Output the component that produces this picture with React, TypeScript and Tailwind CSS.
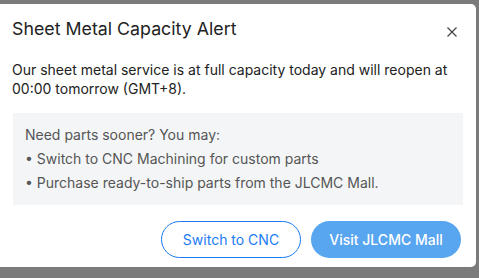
import React from "react";

export default function App() {
  return (
    <div className="w-[479px] h-[278px] bg-[#7b7b7b] pt-[4px] font-['Inter','Liberation_Sans',sans-serif]">
      <div className="w-[476px] h-[263px] bg-white rounded-r-[5px] flex flex-col">
        <div className="flex items-start justify-between pl-[12px] pr-[19px] pt-[11px]">
          <h2 className="text-[17.8px] leading-[28px] text-[#222] font-normal">
            Sheet Metal Capacity Alert
          </h2>
          <button className="mt-[12px] text-[#444]" aria-label="Close">
            <svg width="10" height="10" viewBox="0 0 10 10" fill="none">
              <path d="M0.5 0.5 L9.5 9.5 M9.5 0.5 L0.5 9.5" stroke="currentColor" strokeWidth="1.2" />
            </svg>
          </button>
        </div>

        <p className="mt-[17px] px-[12px] text-[14px] leading-[19px] text-[#222]">
          Our sheet metal service is at full capacity today and will reopen at
          00:00 tomorrow (GMT+8).
        </p>

        <div className="mt-[15px] ml-[13px] mr-[13px] bg-[#f4f5f7] px-[12px] py-[10px] text-[14px] leading-[24px] text-[#555]">
          <p>Need parts sooner? You may:</p>
          <p>• Switch to CNC Machining for custom parts</p>
          <p>• Purchase ready-to-ship parts from the JLCMC Mall.</p>
        </div>

        <div className="mt-[16px] flex justify-end gap-[10px] pr-[15px]">
          <button className="w-[140px] h-[37px] rounded-full border border-[#1a7bf4] text-[#1a7bf4] text-[14px]">
            Switch to CNC
          </button>
          <button className="w-[150px] h-[37px] rounded-full bg-[#58a5f0] text-white text-[14px] font-medium">
            Visit JLCMC Mall
          </button>
        </div>
      </div>
    </div>
  );
}
